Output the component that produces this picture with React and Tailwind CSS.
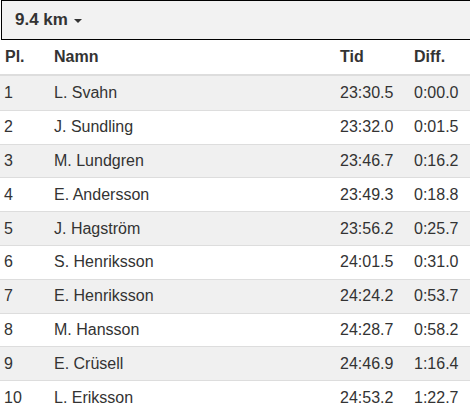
const rows = [
  ['1', 'L. Svahn', '23:30.5', '0:00.0'],
  ['2', 'J. Sundling', '23:32.0', '0:01.5'],
  ['3', 'M. Lundgren', '23:46.7', '0:16.2'],
  ['4', 'E. Andersson', '23:49.3', '0:18.8'],
  ['5', 'J. Hagström', '23:56.2', '0:25.7'],
  ['6', 'S. Henriksson', '24:01.5', '0:31.0'],
  ['7', 'E. Henriksson', '24:24.2', '0:53.7'],
  ['8', 'M. Hansson', '24:28.7', '0:58.2'],
  ['9', 'E. Crüsell', '24:46.9', '1:16.4'],
  ['10', 'L. Eriksson', '24:53.2', '1:22.7'],
];

export default function App() {
  return (
    <div className="w-[470px] h-[414px] overflow-hidden bg-white text-[#333] font-['Liberation_Sans',Arial,sans-serif] text-[16px]">
      <div className="h-[40px] ml-px border border-r-0 border-black bg-[#f2f2f2] flex items-center pl-[13px]">
        <span className="font-bold text-[17px]">9.4 km</span>
        <span className="ml-[6px] mt-[2px] border-x-[4px] border-x-transparent border-t-[4px] border-t-[#333]"></span>
      </div>
      <div className="grid grid-cols-[50px_286px_74px_60px] h-[36px] items-center font-bold border-b-2 border-[#ddd] pl-1">
        <div className="pl-px">Pl.</div>
        <div>Namn</div>
        <div>Tid</div>
        <div>Diff.</div>
      </div>
      {rows.map((r, i) => (
        <div
          key={r[0]}
          className={`grid grid-cols-[50px_286px_74px_60px] h-[33.8px] items-center pl-1 ${i > 0 ? 'border-t border-[#ddd]' : ''} ${i % 2 === 0 ? 'bg-[#f0f0f0]' : 'bg-white'}`}
        >
          <div>{r[0]}</div>
          <div>{r[1]}</div>
          <div>{r[2]}</div>
          <div>{r[3]}</div>
        </div>
      ))}
    </div>
  );
}
